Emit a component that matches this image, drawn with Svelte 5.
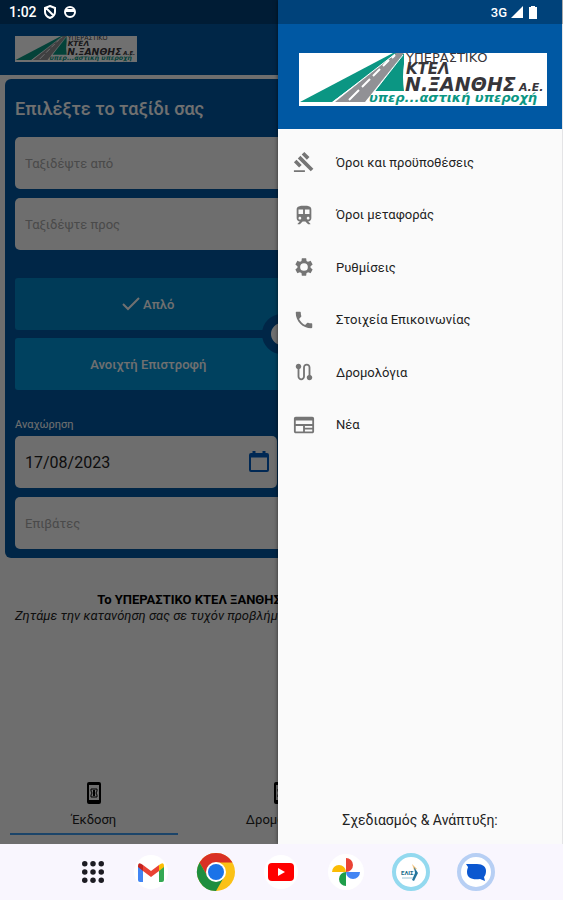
<script>
  // Home screen of the ticket app with the navigation drawer pulled out.

  const MENU = [
    { label: "Όροι και προϋποθέσεις", icon: "M1 21h12v2H1zM5.245 8.07l2.83-2.827 14.14 14.142-2.828 2.828zM12.317 1l5.657 5.656-2.83 2.83-5.654-5.66zM3.825 9.485l5.657 5.657-2.828 2.828-5.657-5.657z" },
    { label: "Όροι μεταφοράς", icon: "M12 2c-4 0-8 .5-8 4v9.5C4 17.43 5.57 19 7.5 19L5 21.5v.5h2.5l3-3h3l3 3H19v-.5L16.5 19c1.93 0 3.5-1.57 3.5-3.5V6c0-3.5-3.58-4-8-4zM7.5 17c-.83 0-1.5-.67-1.5-1.5S6.67 14 7.5 14s1.5.67 1.5 1.5S8.33 17 7.5 17zm3.5-6H6V6h5v5zm5.5 6c-.83 0-1.5-.67-1.5-1.5s.67-1.5 1.5-1.5 1.5.67 1.5 1.5-.67 1.5-1.5 1.5zm1.5-6h-5V6h5v5z" },
    { label: "Ρυθμίσεις", icon: "M19.14 12.94c.04-.3.06-.61.06-.94 0-.32-.02-.64-.07-.94l2.03-1.58c.18-.14.23-.41.12-.61l-1.92-3.32c-.12-.22-.37-.29-.59-.22l-2.39.96c-.5-.38-1.03-.7-1.62-.94l-.36-2.54c-.04-.24-.24-.41-.48-.41h-3.84c-.24 0-.43.17-.47.41l-.36 2.54c-.59.24-1.13.57-1.62.94l-2.39-.96c-.22-.08-.47 0-.59.22L2.74 8.87c-.12.21-.08.47.12.61l2.03 1.58c-.05.3-.09.63-.09.94s.02.64.07.94l-2.03 1.58c-.18.14-.23.41-.12.61l1.92 3.32c.12.22.37.29.59.22l2.39-.96c.5.38 1.03.7 1.62.94l.36 2.54c.05.24.24.41.48.41h3.84c.24 0 .44-.17.47-.41l.36-2.54c.59-.24 1.13-.56 1.62-.94l2.39.96c.22.08.47 0 .59-.22l1.92-3.32c.12-.22.07-.47-.12-.61l-2.01-1.58zM12 16.2a4.2 4.2 0 1 1 0-8.4 4.2 4.2 0 0 1 0 8.4z" },
    { label: "Στοιχεία Επικοινωνίας", icon: "M6.62 10.79c1.44 2.83 3.76 5.14 6.59 6.59l2.2-2.2c.27-.27.67-.36 1.02-.24 1.12.37 2.33.57 3.57.57.55 0 1 .45 1 1V20c0 .55-.45 1-1 1-9.39 0-17-7.61-17-17 0-.55.45-1 1-1h3.5c.55 0 1 .45 1 1 0 1.25.2 2.45.57 3.57.11.35.03.74-.25 1.02l-2.2 2.2z" },
    { label: "Δρομολόγια", icon: "M19 15.18V7c0-2.21-1.79-4-4-4s-4 1.79-4 4v10c0 1.1-.9 2-2 2s-2-.9-2-2V8.82C8.16 8.4 9 7.3 9 6c0-1.66-1.34-3-3-3S3 4.34 3 6c0 1.3.84 2.4 2 2.82V17c0 2.21 1.79 4 4 4s4-1.79 4-4V7c0-1.1.9-2 2-2s2 .9 2 2v8.18c-1.16.41-2 1.51-2 2.82 0 1.66 1.34 3 3 3s3-1.34 3-3c0-1.3-.84-2.4-2-2.82z" },
    { label: "Νέα", icon: "M3 3h18c1.1 0 2 .9 2 2v14c0 1.1-.9 2-2 2H3c-1.1 0-2-.9-2-2V5c0-1.1.9-2 2-2zm0 4v4h18V7zm0 6v6h8v-6zm10 0v2h8v-2zm0 4v2h8v-2z" },
  ];

  const TABS = ["Έκδοση", "Δρομολόγια", "Εισιτήρια"];

  let from = $state("");
  let to = $state("");
  let date = $state("17/08/2023");
  let returnDate = $state("");
  let passengers = $state("");
  let trip = $state("single");
  let tab = $state(0);
  let open = $state(true);
</script>

{#snippet logo()}
  <svg class="logo" viewBox="0 0 248 53" role="img" aria-label="ΚΤΕΛ Ν. Ξάνθης">
    <rect width="248" height="53" fill="#fff" />
    <path d="M1 49 94 0h5L33 49z" fill="#0b9683" />
    <path d="M36 49 97 0h8L66 49z" fill="#919195" />
    <path d="M76 38 104 1h1v10q-2 12 0 27z" fill="#0b9683" />
    <path d="m50 47 10-10M63 34l8-8M74 23l7-7M84 13l6-6M93 5l3-3" stroke="#fff" stroke-width="2" />
    <path d="M34 49 96 1M68 48 104 2" stroke="#fff" />
    <g font-family="'DejaVu Sans', sans-serif" fill="#37353a">
      <text x="107" y="9" font-size="13">ΥΠΕΡΑΣΤΙΚΟ</text>
      <g font-weight="700" font-style="italic">
        <text x="107" y="21" font-size="15">ΚΤΕΛ</text>
        <text x="106" y="38" font-size="19">Ν.ΞΑΝΘΗΣ</text>
        <text x="220" y="38" font-size="11">Α.Ε.</text>
        <text x="70" y="49" font-size="13" fill="#0b9683">υπερ...αστική υπεροχή</text>
      </g>
    </g>
  </svg>
{/snippet}

{#snippet check()}
  <svg width="18" height="14" viewBox="0 0 18 14" fill="none" stroke="currentColor" stroke-width="2"><path d="m1 7 5 5L17 1" /></svg>
{/snippet}

<div class="device">
  <div class="status">
    <span class="clock">1:02</span>
    <svg width="14" height="14" viewBox="0 0 14 14" fill="none" stroke="#fff" stroke-width="2">
      <path d="M7 1 12 3v4q0 4-5 6-5-2-5-6V3zM3 3l8 8" />
    </svg>
    <svg width="14" height="14" viewBox="0 0 14 14">
      <circle cx="7" cy="7" r="5" fill="none" stroke="#fff" stroke-width="2" />
      <path d="M2 4h10v3H2z" fill="#fff" />
    </svg>
    <span class="network">3G</span>
    <svg width="12" height="12" viewBox="0 0 12 12"><path d="M12 0v12H0z" fill="#fff" /></svg>
    <svg width="8" height="13" viewBox="0 0 8 13"><path d="M2 0h4v1h2v12H0V1h2z" fill="#fff" /></svg>
  </div>

  <div class="app">
    <header class="topbar">{@render logo()}</header>

    <form class="card" onsubmit={(e) => e.preventDefault()}>
      <h1>Επιλέξτε το ταξίδι σας</h1>
      <input class="field" aria-label="Ταξιδέψτε από" placeholder="Ταξιδέψτε από" bind:value={from} />
      <input class="field" aria-label="Ταξιδέψτε προς" placeholder="Ταξιδέψτε προς" bind:value={to} />

      <div class="trip">
        <button type="button" onclick={() => { trip = "single"; }}>
          {#if trip === "single"}{@render check()}{/if}
          Απλό
        </button>
        <button type="button" class="open-return" onclick={() => { trip = "open"; }}>
          {#if trip === "open"}{@render check()}{/if}
          Ανοιχτή Επιστροφή
        </button>
        <span class="knob"></span>
      </div>

      <div class="dates">
        <div class="date">
          <label for="departure">Αναχώρηση</label>
          <div class="date-box">
            <input id="departure" class="field" bind:value={date} />
            <svg class="calendar" width="20" height="22" viewBox="0 0 20 22" fill="none" stroke="#005cc0" stroke-width="2">
              <rect x="1" y="3" width="18" height="17" rx="1" /><path d="M1 5h18M5 0v4M15 0v4" stroke-width="3" />
            </svg>
          </div>
        </div>
        <div class="date">
          <label for="return">Επιστροφή</label>
          <div class="date-box"><input id="return" class="field" bind:value={returnDate} /></div>
        </div>
      </div>

      <input class="field" aria-label="Επιβάτες" placeholder="Επιβάτες" bind:value={passengers} />
    </form>

    <div class="notice">
      <strong>Το ΥΠΕΡΑΣΤΙΚΟ ΚΤΕΛ ΞΑΝΘΗΣ σας ενημερώνει για την αγορά</strong>
      <em>Ζητάμε την κατανόηση σας σε τυχόν προβλήματα που μπορεί να εμφανιστούν στην εφαρμογή</em>
    </div>

    <nav class="tabs">
      {#each TABS as name, i}
        <button class:active={tab === i} onclick={() => { tab = i; }}>
          <svg width="14" height="22" viewBox="0 0 14 22" fill="none" stroke="#000">
            <rect x="1" y="1" width="12" height="20" rx="1" stroke-width="2" />
            <path d="M1 2h12M1 19h12" stroke-width="2" />
            <path d="M4 7h6v2L9 11l1 2v2H4v-2l1-2-1-2z" />
            <path d="M7 8v6" stroke-width="2" />
          </svg>
          {name}
        </button>
      {/each}
    </nav>

    {#if open}
      <button class="scrim" aria-label="Κλείσιμο μενού" onclick={() => { open = false; }}></button>
      <aside class="drawer">
        <div class="drawer-head">{@render logo()}</div>
        <nav class="menu">
          {#each MENU as item}
            <a href="#menu">
              <svg width="22" height="22" viewBox="0 0 24 24" fill="#757575" fill-rule="evenodd"><path d={item.icon} /></svg>
              {item.label}
            </a>
          {/each}
        </nav>
        <footer>Σχεδιασμός &amp; Ανάπτυξη:</footer>
      </aside>
    {/if}
  </div>

  <div class="taskbar">
    <button class="all-apps" aria-label="Εφαρμογές">
      <svg width="22" height="22" viewBox="0 0 24 24" fill="#1c1b22">
        {#each [3, 12, 21] as y}
          {#each [3, 12, 21] as x}<circle cx={x} cy={y} r="3" />{/each}
        {/each}
      </svg>
    </button>
    <button aria-label="Gmail">
      <svg width="40" height="40" viewBox="0 0 40 40">
        <circle cx="20" cy="20" r="17" fill="#fff" />
        <path d="M7 14h5v16H9q-2 0-2-2z" fill="#4285f4" />
        <path d="M28 14h5v14q0 2-2 2h-3z" fill="#34a853" />
        <path d="m12 13 8 6 8-6v6l-8 6-8-6z" fill="#ea4335" />
        <path d="M7 15v-1q0-5 5-1v6z" fill="#c5221f" />
        <path d="M33 15v-1q0-5-5-1v6z" fill="#fbbc04" />
      </svg>
    </button>
    <button aria-label="Chrome">
      <svg width="40" height="40" viewBox="0 0 40 40">
        <circle cx="20" cy="20" r="19" fill="#fbc116" />
        <path d="M3.5 10.5A19 19 0 0 1 36.5 10.5H20L11.8 24.7z" fill="#d93025" />
        <path d="M3.5 10.5 11.8 24.7 28.2 24.7 20 39A19 19 0 0 1 3.5 10.5z" fill="#1e8e3e" />
        <circle cx="20" cy="20" r="10" fill="#fff" />
        <circle cx="20" cy="20" r="8" fill="#1a73e8" />
      </svg>
    </button>
    <button aria-label="YouTube">
      <svg width="40" height="40" viewBox="0 0 40 40">
        <circle cx="20" cy="20" r="17" fill="#fff" />
        <rect x="7" y="11" width="26" height="18" rx="4" fill="#f00" />
        <path d="m17 16 7 4-7 4z" fill="#fff" />
      </svg>
    </button>
    <button aria-label="Google Photos">
      <svg width="40" height="40" viewBox="0 0 40 40">
        <circle cx="20" cy="20" r="18" fill="#fff" />
        <path d="M20 6a7 7 0 0 1 0 14z" fill="#ea4335" />
        <path d="M34 20a7 7 0 0 1-14 0z" fill="#4285f4" />
        <path d="M20 34a7 7 0 0 1 0-14z" fill="#1e9e4a" />
        <path d="M6 20a7 7 0 0 1 14 0z" fill="#fbbc04" />
      </svg>
    </button>
    <button aria-label="ΚΤΕΛ">
      <svg width="40" height="40" viewBox="0 0 40 40">
        <circle cx="20" cy="20" r="17" fill="#fff" stroke="#93d9ef" stroke-width="4" />
        <path d="m21 12 5 5-3 1" fill="#f3c27c" />
        <path d="m23 15 4 6-4 8-2-1 3-7z" fill="#23749c" />
        <text x="10" y="23" font-size="6" font-weight="700" font-family="Roboto, sans-serif" fill="#1b6d8b">ΕΛΙΣ</text>
        <path d="M11 26h11" stroke="#9fc5d3" />
      </svg>
    </button>
    <button aria-label="Messages">
      <svg width="40" height="40" viewBox="0 0 40 40">
        <circle cx="20" cy="20" r="17" fill="#fff" stroke="#b7cff4" stroke-width="4" />
        <path d="M10 12h11c6 0 9 3 9 7 0 3-1 5-2 6l1 4-5-2c-8 1-13-1-13-7 0-3 1-4 1-5z" fill="#0b57d0" />
      </svg>
    </button>
  </div>
</div>

<style>
  :global(body) { margin: 0; }
  .device {
    position: relative; min-height: 100vh; display: flex; flex-direction: column;
    font-family: Roboto, "Noto Sans", sans-serif; font-size: 13px; color: #222;
  }
  .device * { box-sizing: border-box; }
  button { font: inherit; border: none; padding: 0; cursor: pointer; }
  svg { display: block; flex: none; }

  .status {
    position: absolute; inset: 0 0 auto; z-index: 3; height: 24px; padding: 0 26px 0 9px;
    display: flex; align-items: center; gap: 6px; background: rgba(0,0,0,0.25); color: #fff; font-weight: 500;
  }
  .clock { font-size: 14px; }
  .network { margin-left: auto; margin-right: -2px; }

  .app {
    position: relative; flex: 1; display: flex; flex-direction: column; overflow: hidden; background: #fafafa;
  }
  .logo { width: 100%; height: auto; }
  .topbar { background: #0058a3; padding: 36px 15px 13px; }
  .topbar .logo { width: 122px; }

  .card {
    margin: 4px 5px 0; padding: 10px 10px 9px; border-radius: 6px; background: #0058a3;
    display: flex; flex-direction: column; gap: 9px;
  }
  h1 { margin: 0; font-size: 18px; line-height: 39px; font-weight: 500; color: #fff; }
  .field {
    width: 100%; height: 52px; padding: 0 10px; border: none; border-radius: 5px;
    background: #fafafa; font: inherit; color: #222; outline: none;
  }
  .field::placeholder { color: #a8a8a8; opacity: 1; }
  .trip { position: relative; margin-top: 19px; display: flex; flex-direction: column; gap: 8px; }
  .trip button {
    height: 52px; padding-right: 50%; border-radius: 3px; background: #0086c8; color: #fff; font-weight: 500;
    display: flex; align-items: center; justify-content: center; gap: 3px;
  }
  .trip .open-return { background: #0094d8; }
  .knob {
    position: absolute; left: 50%; top: 50%; width: 40px; height: 40px; transform: translate(-50%, -50%);
    border: 9px solid #0058a3; border-radius: 50%; background: #fff;
  }
  .dates { margin-top: 18px; display: grid; grid-template-columns: 1fr 1fr; gap: 9px; }
  .date label { display: block; margin-bottom: 3px; font-size: 11px; line-height: 16px; color: #fff; }
  .date-box { position: relative; }
  .date .field { font-size: 16px; }
  .calendar { position: absolute; right: 8px; top: 15px; }

  .notice { margin-top: 34px; padding: 0 15px; text-align: center; line-height: 16px; }
  .notice strong, .notice em { display: block; white-space: nowrap; }
  .notice strong { color: #000; }

  .tabs { margin-top: auto; padding: 0 0 9px; display: grid; grid-template-columns: repeat(3, 1fr); }
  .tabs button {
    margin: 0 10px; height: 54px; padding-top: 1px; background: none; border-bottom: 2px solid transparent;
    display: flex; flex-direction: column; align-items: center; gap: 8px; line-height: 16px; color: #222;
  }
  .tabs button.active { border-color: #3f9cf0; }

  .scrim { position: absolute; inset: 0; background: rgba(0,0,0,0.56); }
  .drawer {
    position: absolute; inset: 0 0 0 auto; width: 285px; display: flex; flex-direction: column;
    background: #fafafa; border-right: 1px solid #e4e4e6; box-shadow: 0 0 4px rgba(0,0,0,0.6);
  }
  .drawer-head { padding: 53px 15px 23px 21px; background: #0058a3; }
  .menu { margin-top: 7px; height: 315px; display: grid; }
  .menu a { padding-left: 15px; display: flex; align-items: center; gap: 21px; color: #222; text-decoration: none; }
  footer { margin-top: auto; padding-bottom: 16px; text-align: center; font-size: 14px; line-height: 16px; }

  .taskbar {
    height: 56px; padding-left: 12px; display: flex; justify-content: center; background: #f9f6fe;
  }
  .taskbar button { width: 65px; background: none; display: flex; align-items: center; justify-content: center; }
  .taskbar .all-apps { width: 52px; }
</style>
